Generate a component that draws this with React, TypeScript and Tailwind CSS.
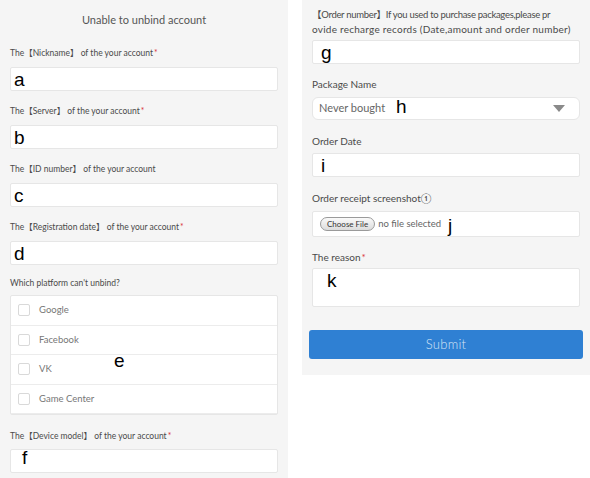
import React from "react";

const F = { fontFamily: "Lato, 'Noto Sans CJK SC', sans-serif" } as React.CSSProperties;

function Label({ children, req, size = "text-[8.5px]" }: { children: React.ReactNode; req?: boolean; size?: string }) {
  return (
    <div className={"h-[14px] leading-[14px] text-[#4a4a4a] whitespace-nowrap " + size}>
      {children}
      {req && <span className="text-[#d9363e] ml-[1px]">*</span>}
    </div>
  );
}

function Letter({ children, cls }: { children: React.ReactNode; cls?: string }) {
  return (
    <span
      className={"text-[19px] leading-none text-black " + (cls || "")}
      style={{ fontFamily: "'Liberation Sans', Arial, sans-serif" }}
    >
      {children}
    </span>
  );
}

function Input({ letter, h = "h-[24px]", pad = "pl-[3px]", cls = "" }: { letter?: string; h?: string; pad?: string; cls?: string }) {
  return (
    <div className={"w-[268px] bg-white border border-[#e6e6e6] rounded-[2px] flex items-start " + h + " " + pad + " " + cls}>
      {letter && <Letter cls="mt-[2px]">{letter}</Letter>}
    </div>
  );
}

function Check({ label }: { label: string }) {
  return (
    <div className="h-[30px] flex items-center pl-[7px] border-b border-[#ececec] last:border-b-0">
      <div className="w-[12px] h-[12px] border border-[#d9d9d9] rounded-[2px] bg-white" />
      <span className="ml-[9px] text-[9.5px] text-[#777]">{label}</span>
    </div>
  );
}

export default function App() {
  return (
    <div className="w-[590px] h-[478px] bg-white flex overflow-hidden" style={F}>
      {/* Left panel */}
      <div className="w-[288px] h-[478px] bg-[#f5f5f5] px-[10px] flex flex-col shrink-0">
        <div className="h-[46px] flex items-start justify-center pt-[12px]">
          <span className="text-[11px] text-[#555] leading-[16px]">Unable to unbind account</span>
        </div>
        <Label req>The【Nickname】 of the your account</Label>
        <div className="mt-[7px] mb-[13px]"><Input letter="a" /></div>
        <Label req>The【Server】 of the your account</Label>
        <div className="mt-[7px] mb-[13px]"><Input letter="b" /></div>
        <Label>The【ID number】 of the your account</Label>
        <div className="mt-[7px] mb-[13px]"><Input letter="c" /></div>
        <Label req>The【Registration date】 of the your account</Label>
        <div className="mt-[7px] mb-[11px]"><Input letter="d" /></div>
        <Label>Which platform can't unbind?</Label>
        <div className="relative mt-[5px] w-[268px] h-[120px] bg-white border border-[#e6e6e6] rounded-[2px] flex flex-col">
          <Check label="Google" />
          <Check label="Facebook" />
          <Check label="VK" />
          <Check label="Game Center" />
          <span className="absolute left-[103px] top-[53px]">
            <Letter>e</Letter>
          </span>
        </div>
        <div className="mt-[14px]">
          <Label req>The【Device model】 of the your account</Label>
        </div>
        <div className="mt-[6px] relative">
          <Input h="h-[24px]" />
          <span className="absolute left-[12px] -top-[3px]">
            <Letter>f</Letter>
          </span>
        </div>
      </div>

      {/* Right panel */}
      <div className="ml-[14px] w-[288px] h-[375px] bg-[#f5f5f5] pl-[10px] pr-[10px] flex flex-col shrink-0">
        <div className="mt-[8px] text-[10px] text-[#4a4a4a] leading-[14px] whitespace-nowrap">
          <div className="text-[9.5px] tracking-[-0.3px]">【Order number】If you used to purchase packages,please pr</div>
          <div className="tracking-[0.25px]">ovide recharge records (Date,amount and order number)</div>
        </div>
        <div className="mt-[4px]"><Input letter="g" pad="pl-[8px]" /></div>
        <div className="mt-[13px]"><Label size="text-[10px]">Package Name</Label></div>
        <div className="mt-[6px] w-[268px] h-[23px] bg-white border border-[#e6e6e6] rounded-[6px] flex items-center pl-[6px] pr-[14px]">
          <span className="text-[11px] text-[#666]">Never bought</span>
          <span className="ml-[11px] -mt-[3px]"><Letter>h</Letter></span>
          <svg className="ml-auto" width="12" height="7" viewBox="0 0 12 7">
            <path d="M0 0 L12 0 L6 7 Z" fill="#8a8a8a" />
          </svg>
        </div>
        <div className="mt-[14px]"><Label size="text-[10px]">Order Date</Label></div>
        <div className="mt-[5px]"><Input letter="i" pad="pl-[8px]" /></div>
        <div className="mt-[14px]"><Label size="text-[10px]">Order receipt screenshot①</Label></div>
        <div className="mt-[6px] w-[268px] h-[26px] bg-white border border-[#e6e6e6] rounded-[2px] flex items-center pl-[7px]">
          <div className="h-[14px] px-[6px] rounded-full border border-[#9a9a9a] bg-gradient-to-b from-[#fafafa] to-[#dcdcdc] flex items-center">
            <span className="text-[8px] text-[#333] leading-none">Choose File</span>
          </div>
          <span className="ml-[3px] text-[9.5px] text-[#666]">no file selected</span>
          <span className="ml-[7px] mt-[4px]"><Letter>j</Letter></span>
        </div>
        <div className="mt-[13px]"><Label req size="text-[10px]">The reason</Label></div>
        <div className="mt-[4px]">
          <Input letter="k" h="h-[39px]" pad="pl-[14px]" />
        </div>
        <div className="mt-[23px] -ml-[3px] w-[274px] h-[29px] bg-[#2f80d3] rounded-[3px] flex items-center justify-center">
          <span className="text-[13px] font-light text-[#d4e5f6] tracking-[0.3px]">Submit</span>
        </div>
      </div>
    </div>
  );
}
